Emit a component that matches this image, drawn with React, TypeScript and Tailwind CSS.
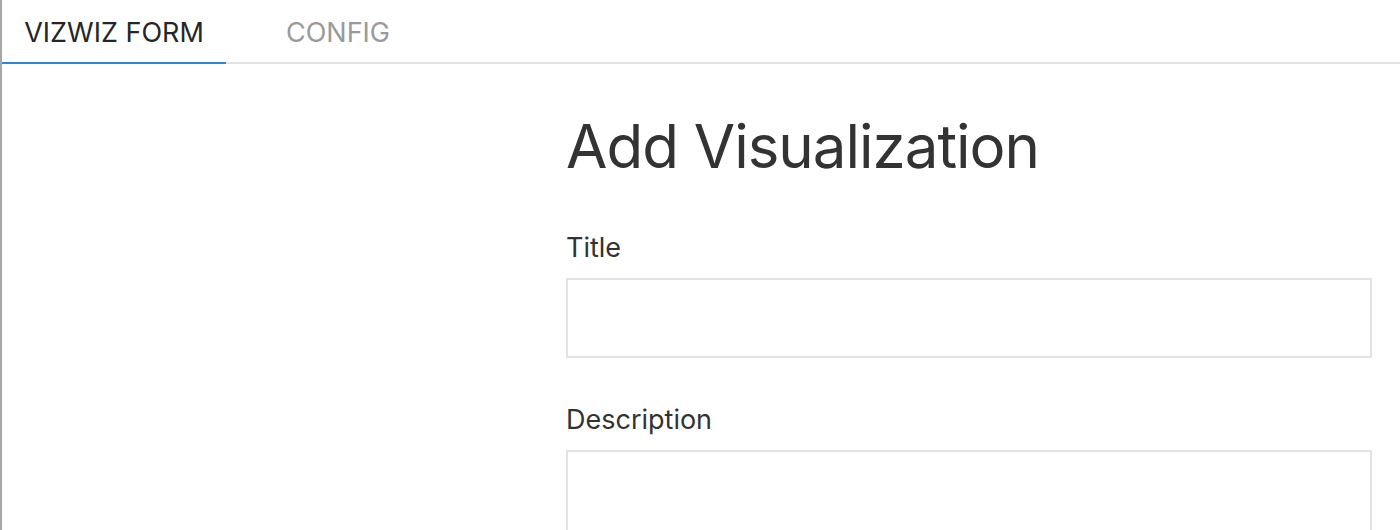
import React, { useState } from "react";

const tabs = ["VIZWIZ FORM", "CONFIG"];

export default function App() {
  const [active, setActive] = useState(0);

  return (
    <div
      className="min-h-[530px] border-l-2 border-[#a6a6a6] bg-white text-[#333333]"
      style={{ fontFamily: "Inter, 'Noto Sans', sans-serif" }}
    >
      <div className="flex h-16 border-b-2 border-[#e3e3e3]">
        {tabs.map((t, i) => (
          <button
            key={t}
            onClick={() => setActive(i)}
            className={
              i === active
                ? "-mb-[2px] w-56 border-b-2 border-[#2b87e0] pt-1 text-[27px] text-[#262626]"
                : "-mb-[2px] w-56 border-b-2 border-transparent pt-1 text-[27px] text-[#9a9a9a]"
            }
          >
            {t}
          </button>
        ))}
      </div>

      <div className="flex">
        <div className="w-[564px] shrink-0" />
        <div className="flex-1 pr-[28px]">
          <h1 className="mt-[42px] text-[60px] leading-[80px] tracking-[-1px] text-[#333333]">
            Add Visualization
          </h1>

          <label className="mt-[46px] block text-[27px] leading-8">Title</label>
          <input className="mt-[14px] block h-20 w-full border-2 border-[#e3e3e3] outline-none" />

          <label className="mt-[46px] block text-[27px] leading-8">Description</label>
          <textarea className="mt-[14px] block h-32 w-full resize-none border-2 border-[#e3e3e3] outline-none" />
        </div>
      </div>
    </div>
  );
}
